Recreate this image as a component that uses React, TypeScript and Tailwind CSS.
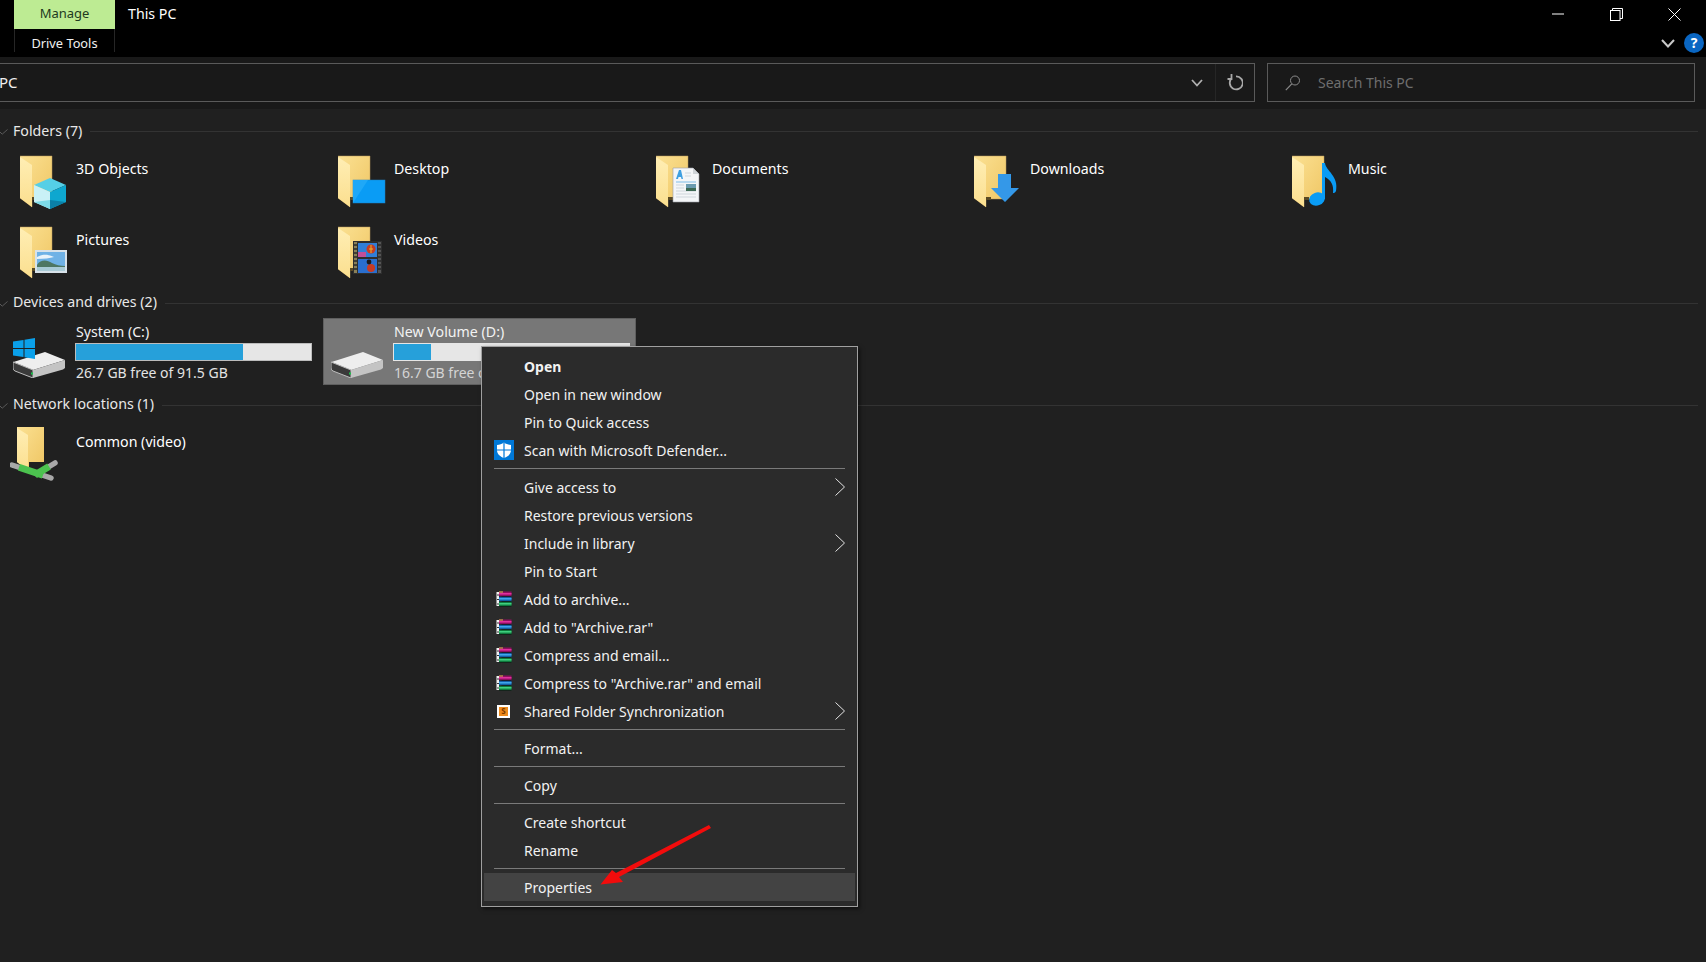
import React from "react";

function FolderDefs() {
  return (
    <defs>
      <linearGradient id="fb" x1="0" y1="0" x2="1" y2="1">
        <stop offset="0" stopColor="#fbe193" />
        <stop offset="1" stopColor="#efc562" />
      </linearGradient>
      <linearGradient id="ff" x1="0" y1="0" x2="0" y2="1">
        <stop offset="0" stopColor="#ffeeb4" />
        <stop offset="1" stopColor="#fbdf8f" />
      </linearGradient>
    </defs>
  );
}

function FolderBody() {
  return (
    <g>
      <FolderDefs />
      <path d="M0 1H32V44H12V52L0 43Z" fill="url(#fb)" stroke="#b5955a" strokeWidth="0.5" />
      <rect x="12" y="42" width="5" height="3" fill="#5a4a24" />
      <path d="M0 2L12 10V52L0 43Z" fill="url(#ff)" />
    </g>
  );
}

function Folder({ children }: { children?: React.ReactNode }) {
  return (
    <svg width="48" height="54" viewBox="0 0 48 54" className="shrink-0">
      <FolderBody />
      {children}
    </svg>
  );
}

const cube = (
  <g>
    <path d="M30 23L46 30L30 37L14 30Z" fill="#55cfe6" />
    <path d="M14 30L30 37V54L14 47Z" fill="#c9f1f6" />
    <path d="M30 37L46 30V47L30 54Z" fill="#0ea7cf" />
    <path d="M30 45L46 47L30 54Z" fill="#0b7fa6" />
    <path d="M14 47L30 45V54Z" fill="#7ddbe8" />
  </g>
);

const desktop = (
  <g>
    <rect x="15" y="25" width="32" height="23" fill="#0a9cf5" stroke="#1c7fc4" strokeWidth="0.5" />
    <path d="M15 48L30 25H15Z" fill="#1fa8f7" />
  </g>
);

const documents = (
  <g>
    <path d="M17 13H37L43 19V47H17Z" fill="#f4f6f8" stroke="#9aa0a6" strokeWidth="0.6" />
    <path d="M37 13V19H43Z" fill="#cfd4d8" />
    <path d="M20 24L23 15H25L27 24H25.5L25 22H22.5L22 24Z" fill="#3f9fe0" />
    <path d="M20 27H40" stroke="#7fbce8" strokeWidth="1" />
    <path d="M29 18H35M29 21H35M20 30H28M20 33H28M20 36H40M20 39H40M20 42H40" stroke="#cfd6dc" strokeWidth="1" />
    <rect x="30" y="29" width="10" height="7" fill="#6b9bb0" />
    <rect x="30" y="33" width="10" height="3" fill="#3e6a55" />
  </g>
);

const downloads = <path d="M24 19H37V33H45L31 47L17 33H24Z" fill="#3498e8" />;

const music = (
  <g>
    <ellipse cx="25" cy="44" rx="8" ry="6.5" fill="#0a9cf5" transform="rotate(-20 25 44)" />
    <path d="M30 8H33C34 16 47 21 44 36C43 38 42 38 41 38C42 30 39 25 33 22V44H30Z" fill="#0a9cf5" />
  </g>
);

const pictures = (
  <g>
    <rect x="15" y="24" width="32" height="23" fill="#d8e2ea" />
    <rect x="17" y="26" width="28" height="19" fill="#6fb2e6" />
    <path d="M17 31C24 27 30 29 34 31C30 32 24 33 17 33Z" fill="#e9f3fa" />
    <path d="M17 39C21 33 27 34 32 37C36 39 40 40 45 40V45H17Z" fill="#4e7763" />
    <rect x="17" y="41" width="28" height="4" fill="#a9cbd6" />
  </g>
);

const videos = (
  <g>
    <rect x="15" y="15" width="29" height="33" fill="#2e2e2e" />
    <rect x="16" y="16" width="3" height="31" fill="#8a8058" />
    <rect x="40" y="16" width="3" height="31" fill="#555" />
    <rect x="20" y="17" width="19" height="14" fill="#2f7ed8" />
    <rect x="20" y="33" width="19" height="14" fill="#2a6fce" />
    <rect x="20" y="26" width="8" height="5" fill="#c14f9a" />
    <circle cx="33" cy="23" r="4.5" fill="#c83b22" />
    <path d="M31 23H35M33 19V27" stroke="#e9b52b" strokeWidth="1" />
    <circle cx="33" cy="42" r="4" fill="#c83b22" />
    <circle cx="31" cy="36" r="2.4" fill="#1b1b1b" />
    <path d="M16 19H19M16 23H19M16 27H19M16 31H19M16 35H19M16 39H19M16 43H19M40 19H43M40 23H43M40 27H43M40 31H43M40 35H43M40 39H43M40 43H43" stroke="#2a2a2a" strokeWidth="1.5" />
  </g>
);

function FolderItem({ name, art }: { name: string; art: React.ReactNode }) {
  return (
    <div className="flex h-[65px]">
      <Folder>{art}</Folder>
      <span className="ml-[8px] mt-[4px] h-[20px] leading-[20px] text-white">{name}</span>
    </div>
  );
}

function SectionHeader({ title, mt, tp }: { title: string; mt: string; tp?: string }) {
  return (
    <div className={`flex h-[22px] items-center ${mt}`}>
      <svg width="8" height="6" viewBox="0 0 8 6" className="mr-[5px] mt-[3px] shrink-0">
        <path d="M0 3L2.2 5.2L7.5 0.5" fill="none" stroke="#5a5a5a" strokeWidth="1" />
      </svg>
      <span className={`whitespace-nowrap leading-[20px] text-[#e8e8e8] ${tp ?? ""}`}>{title}</span>
      <div className="ml-[8px] mr-[8px] mt-[3px] h-px flex-1 bg-[#333333]" />
    </div>
  );
}

function DriveShape({ win }: { win?: boolean }) {
  return (
    <svg width="52" height="40" viewBox="0 0 52 40" className="shrink-0">
      <path d="M0.5 24L32 14L52 22L20 32Z" fill="#eeeeee" />
      <path d="M0 24L20 32V40L2 33Q0 32 0 30Z" fill="#3a3a3a" stroke="#bdbdbd" strokeWidth="1" />
      <path d="M20 32L52 22V30L50 31.5L20 40Z" fill="#c4c4c4" />
      <rect x="18" y="34.5" width="2" height="2" fill="#19c24a" />
      {win && (
        <g fill="#0aa0ea">
          <path d="M0 3.5L10.5 2V10H0Z" />
          <path d="M11.5 1.8L22 0V10H11.5Z" />
          <path d="M0 11H10.5V19L0 17.5Z" />
          <path d="M11.5 11H22V21L11.5 19.2Z" />
        </g>
      )}
    </svg>
  );
}

function Drive({ name, free, fill, selected, win }: { name: string; free: string; fill: string; selected?: boolean; win?: boolean }) {
  return (
    <div className={`flex h-[67px] w-[313px] border ${selected ? "border-[#5f5f5f] bg-[#777777]" : "border-transparent"}`}>
      <div className="w-[69px] pl-[7px] pt-[19px]">
        <DriveShape win={win} />
      </div>
      <div className="w-[237px] pt-[3px]">
        <div className="ml-px h-[20px] whitespace-nowrap leading-[20px] text-[#f2f2f2]">{name}</div>
        <div className={`mt-px h-[18px] w-[237px] border bg-[#e6e6e6] ${selected ? "border-[#e6e6e6]" : "border-[#bcbcbc]"}`}>
          <div className={`h-full bg-[#26a0da] ${fill}`} />
        </div>
        <div className={`ml-px mt-[2px] h-[20px] whitespace-nowrap text-[14px] leading-[20px] ${selected ? "text-[#d4d4d4]" : "text-[#e4e4e4]"}`}>{free}</div>
      </div>
    </div>
  );
}

function Rar() {
  return (
    <svg width="16" height="16" viewBox="0 0 16 16" className="ml-[2px]">
      <rect x="0.5" y="1" width="5" height="14" fill="#f2f2f2" />
      <path d="M1 4H5M1 8.5H5M1 13H5" stroke="#333" strokeWidth="1" />
      <rect x="3" y="0.5" width="12.5" height="5" fill="#8e0f60" />
      <rect x="3" y="2" width="12.5" height="1.6" fill="#e0309c" />
      <rect x="3" y="0.5" width="4" height="1" fill="#d8c04a" />
      <rect x="3" y="5.5" width="12.5" height="5" fill="#125fa6" />
      <rect x="3" y="7" width="12.5" height="1.6" fill="#3fa6ea" />
      <rect x="3" y="10.5" width="12.5" height="5" fill="#0f7a3d" />
      <rect x="3" y="12" width="12.5" height="1.6" fill="#3fd07f" />
      <path d="M3 5.5H15.5M3 10.5H15.5M3 15.5H15.5" stroke="#111" strokeWidth="0.7" />
    </svg>
  );
}

function Defender() {
  return (
    <svg width="20" height="20" viewBox="0 0 20 20">
      <rect width="20" height="20" fill="#0078d7" />
      <path d="M10 2.5C12 4 14.5 4.8 17 5V10C17 14 14 16.5 10 18C6 16.5 3 14 3 10V5C5.5 4.8 8 4 10 2.5Z" fill="#ffffff" />
      <path d="M10 2.5V18M3 10H17" stroke="#0078d7" strokeWidth="1.2" />
    </svg>
  );
}

function SyncIcon() {
  return (
    <div className="ml-[3px] flex h-[13px] w-[13px] items-center justify-center bg-white">
      <div className="flex h-[9px] w-[9px] items-center justify-center bg-[#ee8a1c] text-[8px] font-bold leading-none text-[#7a3a00]">S</div>
    </div>
  );
}

function Chevron() {
  return (
    <svg width="10" height="18" viewBox="0 0 10 18" className="shrink-0">
      <path d="M0.5 0.5L9.5 9L0.5 17.5" fill="none" stroke="#e4e4e4" strokeWidth="1" />
    </svg>
  );
}

function MenuItem({ label, icon, sub, bold, active }: { label: string; icon?: React.ReactNode; sub?: boolean; bold?: boolean; active?: boolean }) {
  return (
    <div className={`mx-[2px] flex h-[28px] items-center pr-[10px] ${active ? "bg-[#434343]" : ""}`}>
      <div className="flex w-[40px] shrink-0 items-center pl-[10px]">{icon}</div>
      <span className={`flex-1 whitespace-nowrap text-[#f2f2f2] ${bold ? "font-bold" : ""}`}>{label}</span>
      {sub && <Chevron />}
    </div>
  );
}

function Sep() {
  return <div className="mx-[12px] my-[4px] h-px bg-[#7a7a7a]" />;
}

export default function App() {
  return (
    <div className="relative flex h-[962px] w-[1706px] flex-col overflow-hidden bg-[#202020] font-['Noto_Sans','Liberation_Sans',sans-serif] text-[14px]">
      {/* Title bar */}
      <div className="flex h-[57px] shrink-0 bg-black pl-[14px]">
        <div className="w-[101px]">
          <div className="flex h-[29px] items-center justify-center bg-[#bdeb93] pb-[2px] text-[13px] text-[#1e3a1e]">Manage</div>
          <div className="flex h-[23px] items-center justify-center border-x border-[#262626] pt-[7px] text-[12.8px] text-[#f0f0f0]">Drive Tools</div>
        </div>
        <div className="ml-[13px] mt-[3px] text-[14.2px] leading-[22px] text-white">This PC</div>
        <div className="ml-auto flex w-[180px] flex-col pr-[2px]">
          <div className="flex h-[28px] items-center">
            <svg width="12" height="12" viewBox="0 0 12 12" className="ml-[26px]"><path d="M0 6H12" stroke="#fff" /></svg>
            <svg width="13" height="13" viewBox="0 0 13 13" className="ml-[46px]">
              <rect x="0.5" y="2.5" width="9.5" height="10" fill="none" stroke="#fff" />
              <path d="M2.5 2.5V0.5H12.5V10.5H10" fill="none" stroke="#fff" />
            </svg>
            <svg width="13" height="13" viewBox="0 0 13 13" className="ml-[45px]"><path d="M0.5 0.5L12.5 12.5M12.5 0.5L0.5 12.5" stroke="#fff" /></svg>
          </div>
          <div className="flex h-[26px] items-start">
            <svg width="14" height="9" viewBox="0 0 14 9" className="ml-[135px] mt-[11px]"><path d="M1 1L7 7.5L13 1" fill="none" stroke="#c8c8c8" strokeWidth="2" /></svg>
            <div className="ml-[9px] mt-[5px] flex h-[20px] w-[20px] items-center justify-center rounded-full bg-[#0a66c2] text-[14px] font-bold leading-none text-white">?</div>
          </div>
        </div>
      </div>

      {/* Address bar */}
      <div className="flex h-[52px] shrink-0 bg-[#191919] pt-[6px]">
        <div className="flex h-[39px] w-[1255px] items-center border-y border-r border-[#5a5a5a]">
          <span className="-ml-[1px] flex-1 text-[15px] leading-none text-[#f0f0f0]">PC</span>
          <svg width="12" height="8" viewBox="0 0 12 8" className="mr-[12px]"><path d="M1 1L6 6.5L11 1" fill="none" stroke="#b0b0b0" strokeWidth="1.8" /></svg>
          <div className="flex h-full w-[39px] items-center justify-center border-l border-[#262626]">
            <svg width="16" height="17" viewBox="0 0 16 17"><path d="M5 4A6.5 6.5 0 1 0 9 2.4M4.5 0V5H0.5" fill="none" stroke="#a8a8a8" strokeWidth="1.8" /></svg>
          </div>
        </div>
        <div className="ml-[12px] flex h-[39px] w-[428px] items-center border border-[#5a5a5a] pl-[17px]">
          <svg width="16" height="16" viewBox="0 0 16 16"><circle cx="10" cy="5.5" r="4.5" fill="none" stroke="#8a8a8a" strokeWidth="1" /><path d="M6.8 8.8L0.8 15.2" stroke="#8a8a8a" strokeWidth="1.2" /></svg>
          <span className="ml-[17px] text-[14px] text-[#6e6e6e]">Search This PC</span>
        </div>
      </div>

      {/* Content */}
      <div className="flex-1 pt-[10px] text-[14.2px]">
        <SectionHeader title="Folders (7)" mt="" tp="pt-[2px]" />
        <div className="mt-[14px] grid grid-cols-[repeat(5,318px)] gap-y-[6px] pl-[20px]">
          <FolderItem name="3D Objects" art={cube} />
          <FolderItem name="Desktop" art={desktop} />
          <FolderItem name="Documents" art={documents} />
          <FolderItem name="Downloads" art={downloads} />
          <FolderItem name="Music" art={music} />
          <FolderItem name="Pictures" art={pictures} />
          <FolderItem name="Videos" art={videos} />
        </div>
        <SectionHeader title="Devices and drives (2)" mt="" />
        <div className="mt-[5px] grid grid-cols-[repeat(2,318px)] pl-[5px]">
          <Drive name="System (C:)" free="26.7 GB free of 91.5 GB" fill="w-[71%]" win />
          <Drive name="New Volume (D:)" free="16.7 GB free of 91.5 GB" fill="w-[15.6%]" selected />
        </div>
        <SectionHeader title="Network locations (1)" mt="mt-[8px]" />
        <div className="mt-[10px] flex pl-[10px]">
          <svg width="50" height="58" viewBox="0 0 50 58" className="shrink-0">
            <path d="M7 2H34V37H19V46L7 37Z" fill="url(#fb)" />
            <path d="M7 3L18 10V46L7 37Z" fill="url(#ff)" />
            <path d="M2 40L41 53" stroke="#a8a8a8" strokeWidth="5.5" strokeLinecap="round" />
            <path d="M45 38L27 49" stroke="#a8a8a8" strokeWidth="5.5" strokeLinecap="round" />
            <path d="M9 42.3L33 50.3" stroke="#4cc24f" strokeWidth="7" />
            <path d="M39 41.5L25 50" stroke="#4cc24f" strokeWidth="7" />
          </svg>
          <span className="ml-[16px] mt-[7px] h-[20px] leading-[20px] text-white">Common (video)</span>
        </div>
      </div>

      {/* Context menu */}
      <div className="absolute left-[481px] top-[346px] w-[377px] border border-[#a0a0a0] bg-[#2b2b2b] py-[5px] shadow-[2px_2px_4px_rgba(0,0,0,0.5)]">
        <MenuItem label="Open" bold />
        <MenuItem label="Open in new window" />
        <MenuItem label="Pin to Quick access" />
        <MenuItem label="Scan with Microsoft Defender..." icon={<Defender />} />
        <Sep />
        <MenuItem label="Give access to" sub />
        <MenuItem label="Restore previous versions" />
        <MenuItem label="Include in library" sub />
        <MenuItem label="Pin to Start" />
        <MenuItem label="Add to archive..." icon={<Rar />} />
        <MenuItem label={'Add to "Archive.rar"'} icon={<Rar />} />
        <MenuItem label="Compress and email..." icon={<Rar />} />
        <MenuItem label={'Compress to "Archive.rar" and email'} icon={<Rar />} />
        <MenuItem label="Shared Folder Synchronization" icon={<SyncIcon />} sub />
        <Sep />
        <MenuItem label="Format..." />
        <Sep />
        <MenuItem label="Copy" />
        <Sep />
        <MenuItem label="Create shortcut" />
        <MenuItem label="Rename" />
        <Sep />
        <MenuItem label="Properties" active />
      </div>

      {/* Red annotation arrow */}
      <svg className="absolute left-[595px] top-[820px]" width="120" height="70" viewBox="0 0 120 70">
        <path d="M114 5L116 8L24 57L28 62L5.5 64.5L17 50L21 53Z" fill="#f20c0c" />
      </svg>
    </div>
  );
}
